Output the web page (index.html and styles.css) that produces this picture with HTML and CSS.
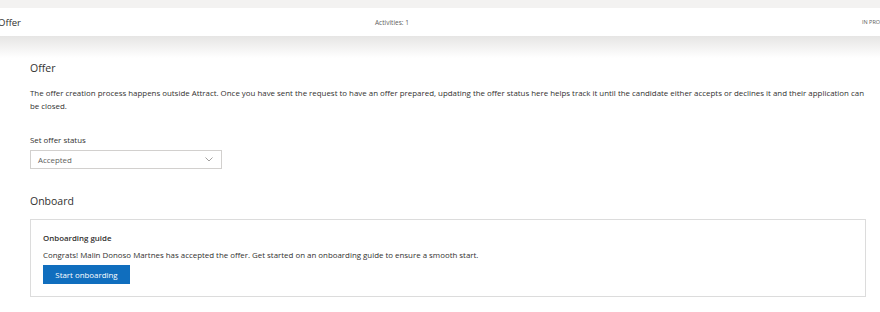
FILE: index.html
```html
<!DOCTYPE html>
<html lang="en">
<head>
    <meta charset="UTF-8">
    <meta name="viewport" content="width=device-width, initial-scale=1.0">
    <title>Offer</title>
    <link rel="stylesheet" href="styles.css">
</head>
<body>
    <div class="topbar">
        <div class="header">
            <span class="header-title">Offer</span>
            <span class="header-activities">Activities: 1</span>
            <span class="header-status">IN PROGRESS</span>
        </div>
        <div class="fade"></div>
    </div>
    <div class="content">
        <h2>Offer</h2>
        <p class="intro">The offer creation process happens outside Attract. Once you have sent the request to have an offer prepared, updating the offer status here helps track it until the candidate either accepts or declines it and their application can be closed.</p>

        <label class="field-label" for="status">Set offer status</label>
        <div class="dropdown" id="status">
            <span>Accepted</span>
            <svg width="8" height="5" viewBox="0 0 8 5"><path d="M0.5 0.5 L4 4 L7.5 0.5" fill="none" stroke="#8a8886" stroke-width="0.8"/></svg>
        </div>

        <h2 class="onboard-title">Onboard</h2>
        <div class="card">
            <h3>Onboarding guide</h3>
            <p>Congrats! Malin Donoso Martnes has accepted the offer. Get started on an onboarding guide to ensure a smooth start.</p>
            <button class="primary">Start onboarding</button>
        </div>
    </div>
</body>
</html>
```

FILE: styles.css
```css
body {
    font-family: "Open Sans", Arial, sans-serif;
    background-color: #fff;
    color: #323130;
    margin: 0;
    overflow: hidden;
}
.topbar {
    background-color: #f3f2f1;
    padding-top: 8px;
}
.header {
    background-color: #fff;
    height: 28px;
    display: flex;
    align-items: center;
    overflow: hidden;
    white-space: nowrap;
    color: #605e5c;
}
.header-title {
    flex: none;
    width: 377px;
    margin-left: -2px;
    font-size: 9.5px;
    color: #323130;
}
.header-activities {
    flex: none;
    width: 487px;
    font-size: 6.5px;
}
.header-status {
    flex: none;
    font-size: 5.5px;
}
.fade {
    height: 22px;
    background: linear-gradient(#e6e5e4, #fff);
}
.content {
    padding: 0 14px 0 30px;
}
.content h2 {
    font-size: 10.5px;
    font-weight: 400;
    margin: 2px 0 0;
    line-height: 16px;
}
.intro {
    font-size: 7.9px;
    line-height: 12.5px;
    margin: 11px 0 0;
}
.field-label {
    display: block;
    font-size: 7.9px;
    margin-top: 22px;
    line-height: 12px;
}
.dropdown {
    box-sizing: border-box;
    width: 192px;
    height: 19px;
    margin-top: 4px;
    border: 1px solid #d2d0ce;
    display: flex;
    align-items: center;
    justify-content: space-between;
    padding: 0 8px 0 7px;
    font-size: 7.9px;
    color: #605e5c;
}
.content .onboard-title {
    margin-top: 24px;
}
.card {
    margin-top: 10px;
    border: 1px solid #dcdcdc;
    padding: 12px 12px 12px;
}
.card h3 {
    font-size: 7.9px;
    font-weight: 600;
    margin: 0;
    line-height: 12px;
}
.card p {
    font-size: 7.9px;
    margin: 5px 0 0;
    line-height: 12px;
}
.primary {
    display: block;
    margin-top: 4px;
    background-color: #106ebe;
    color: #fff;
    border: none;
    font-family: inherit;
    font-size: 7.9px;
    width: 87px;
    height: 19px;
    padding: 0;
    cursor: pointer;
}
```
